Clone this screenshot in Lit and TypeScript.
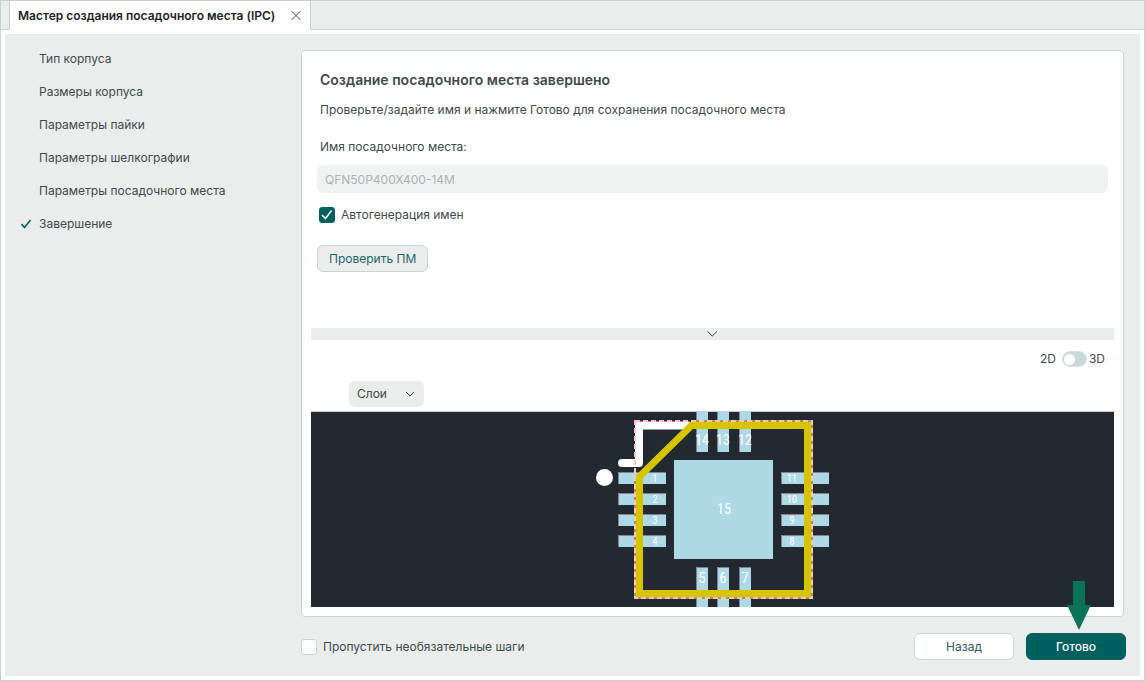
import { LitElement, html, css, svg } from "lit";
import { customElement, state } from "lit/decorators.js";

const STEPS = [
  "Тип корпуса",
  "Размеры корпуса",
  "Параметры пайки",
  "Параметры шелкографии",
  "Параметры посадочного места",
  "Завершение",
];

@customElement("footprint-preview")
class FootprintPreview extends LitElement {
  static styles = css`
    :host {
      display: block;
      background: #222931;
      min-height: 0;
      overflow: hidden;
    }
    svg {
      display: block;
      width: 100%;
      height: 100%;
    }
    .pad {
      fill: #add8e6;
    }
    .edge {
      fill: none;
      stroke: #8d7f88;
      stroke-width: 1;
    }
    .silk {
      fill: none;
      stroke: #fff;
      stroke-width: 8;
      stroke-linecap: round;
      stroke-linejoin: round;
    }
    .dot {
      fill: #fff;
    }
    .body {
      fill: none;
      stroke: #d6c400;
      stroke-width: 7;
    }
    .courtyard-base {
      fill: none;
      stroke: #a89a3a;
      stroke-width: 2;
    }
    .courtyard {
      fill: none;
      stroke: #ffc0cb;
      stroke-width: 2;
      stroke-dasharray: 5 3;
    }
    text {
      fill: #fff;
      font-family: "Roboto Condensed", Roboto, sans-serif;
      font-size: 10px;
      text-anchor: middle;
    }
    .pair {
      font-size: 14px;
    }
    .single {
      font-size: 15px;
    }
  `;

  private pad(x: number, y: number, w: number, h: number) {
    return svg`
      <rect class="pad" x=${x} y=${y} width=${w} height=${h}></rect>
      <path class="edge" d="M${x + 0.5} ${y + h}V${y + 0.5}H${x + w}"></path>`;
  }

  render() {
    const rows = [60, 81, 102, 123];
    const cols = [106, 127, 149];
    return html`
      <svg viewBox="0 0 245 195" role="img" aria-label="Посадочное место">
        ${rows.map((y) => [this.pad(28, y, 48, 12), this.pad(191, y, 48, 12)])}
        ${cols.map((x) => [this.pad(x, -30, 12, 70), this.pad(x, 155, 12, 60)])}
        <rect class="pad" x="84" y="48" width="99" height="99"></rect>
        <path class="silk" d="M32 51H49V13.5H98"></path>
        <circle class="dot" cx="14.5" cy="65.5" r="8.5"></circle>
        <path class="courtyard-base" d="M102 9H222V186H45V64"></path>
        <path class="body" d="M49.5 64.5L101.5 13.5H217.5V181.5H49.5Z"></path>
        <rect class="courtyard" x="45" y="9" width="177" height="177"></rect>
        ${rows.map(
          (y, i) => svg`
            <text x="65" y=${y + 10}>${i + 1}</text>
            <text x="202" y=${y + 10}>${11 - i}</text>`
        )}
        ${cols.map(
          (x, i) => svg`
            <text class="pair" x=${x + 6} y="33">${14 - i}</text>
            <text class="single" x=${x + 6} y="171">${5 + i}</text>`
        )}
        <text class="pair" x="134" y="102">15</text>
      </svg>
    `;
  }
}

@customElement("app-root")
class AppRoot extends LitElement {
  static styles = css`
    :host {
      display: block;
      font-family: Inter, "Noto Sans", sans-serif;
      font-size: 12px;
      line-height: 20px;
      color: #404a4a;
    }
    * {
      box-sizing: border-box;
    }
    h1,
    p,
    ul {
      margin: 0;
      padding: 0;
    }
    button,
    input,
    select {
      font: inherit;
      color: inherit;
      margin: 0;
    }
    .window {
      display: flex;
      flex-direction: column;
      min-height: 100vh;
      border: 1px solid #c5d3d0;
      background: #fff;
    }
    .tabs {
      display: flex;
      height: 29px;
      background: #ebedec;
    }
    .tabs::before {
      content: "";
      width: 8px;
      border-bottom: 1px solid #c5d3d0;
    }
    .tabs::after {
      content: "";
      flex: 1;
      border-bottom: 1px solid #c5d3d0;
    }
    .tab {
      display: flex;
      align-items: center;
      gap: 15px;
      padding: 0 8px;
      border: solid #c5d3d0;
      border-width: 0 1px;
      background: #fff;
      color: #1c2424;
      font-weight: 600;
    }
    .close {
      display: flex;
      padding: 0;
      border: 0;
      background: none;
    }
    .icon {
      fill: none;
      stroke: #404a4a;
      stroke-width: 1;
    }
    .panel {
      flex: 1;
      display: grid;
      grid-template-columns: 296px 1fr;
      margin: 4px;
      background: #ebedec;
    }
    .steps {
      list-style: none;
      padding-top: 8px;
    }
    .step {
      display: grid;
      grid-template-columns: 18px 1fr;
      align-items: center;
      height: 33px;
      padding-left: 16px;
      color: inherit;
      text-decoration: none;
    }
    .step svg {
      grid-row: 1;
      fill: none;
      stroke: #006060;
      stroke-width: 1.6;
    }
    .step-name {
      grid-column: 2;
    }
    .main {
      display: flex;
      flex-direction: column;
      gap: 16px;
      padding: 16px 14px 16px 0;
    }
    .card {
      flex: 1;
      display: flex;
      flex-direction: column;
      margin-right: 2px;
      padding: 0 9px 9px;
      border: 1px solid #c9d6d3;
      border-radius: 4px;
      background: #fff;
    }
    .form {
      display: flex;
      flex-direction: column;
      align-items: flex-start;
      padding: 19px 6px 56px;
    }
    .title,
    .hint,
    .label {
      padding-left: 3px;
    }
    .title {
      font-size: 14px;
      line-height: 20px;
      font-weight: 600;
    }
    .hint {
      margin-top: 10px;
    }
    .label {
      margin-top: 17px;
    }
    .name {
      width: 100%;
      height: 28px;
      margin-top: 8px;
      padding: 0 8px;
      border: 0;
      border-radius: 6px;
      background: #f0f2f1;
      color: #a9b3b2;
    }
    .check {
      display: flex;
      align-items: center;
      gap: 6px;
    }
    .auto {
      margin-top: 12px;
      padding-left: 2px;
    }
    .box {
      display: grid;
      width: 16px;
      height: 16px;
    }
    .box > * {
      grid-area: 1 / 1;
    }
    .box input {
      appearance: none;
      width: 16px;
      height: 16px;
      border: 1px solid #c5d3d0;
      border-radius: 3px;
      background: #fff;
    }
    .box input:checked {
      border-color: #006060;
      background: #006060;
    }
    .box svg {
      fill: none;
      stroke: #fff;
      stroke-width: 1.6;
      pointer-events: none;
    }
    .btn {
      height: 27px;
      padding: 0 11px;
      border: 1px solid #c9d6d3;
      border-radius: 6px;
      background: #fff;
      color: #2c5b5b;
      line-height: 20px;
    }
    .verify {
      margin-top: 20px;
      background: #ebedec;
      color: #17696a;
    }
    .wide {
      width: 100px;
    }
    .primary {
      border-color: #006060;
      background: #006060;
      color: #fff;
      font-weight: 500;
    }
    .splitter {
      display: flex;
      justify-content: center;
      align-items: center;
      height: 12px;
      padding: 0;
      border: 0;
      background: #ebedec;
    }
    .mode {
      display: flex;
      justify-content: flex-end;
      align-items: center;
      margin-top: 9px;
      padding-right: 9px;
    }
    .switch {
      appearance: none;
      display: flex;
      align-items: center;
      width: 25px;
      height: 16px;
      margin: 0 2px 0 6px;
      padding: 1px;
      border: 1px solid #d9e2e0;
      border-radius: 8px;
      background: #cbd8d6;
    }
    .switch::before {
      content: "";
      width: 11px;
      height: 11px;
      border-radius: 6px;
      background: #fff;
    }
    .switch:checked {
      justify-content: flex-end;
    }
    .layers {
      display: grid;
      align-items: center;
      align-self: flex-start;
      margin: 12px 0 4px 38px;
    }
    .layers > * {
      grid-area: 1 / 1;
    }
    .layers select {
      appearance: none;
      width: 75px;
      height: 26px;
      padding: 0 8px;
      border: 0;
      border-radius: 6px;
      background: #ebedec;
    }
    .layers svg {
      justify-self: end;
      margin-right: 9px;
      pointer-events: none;
    }
    footprint-preview {
      flex: 1 1 196px;
      border-top: 1px solid #c9d0d2;
    }
    .footer {
      display: flex;
      align-items: center;
      gap: 12px;
    }
    .skip {
      margin-right: auto;
    }
    .finish {
      position: relative;
      display: flex;
    }
    .arrow {
      position: absolute;
      right: 35px;
      bottom: 30px;
      fill: #0b7358;
      pointer-events: none;
    }
  `;

  @state() private auto = true;

  render() {
    return html`
      <div class="window">
        <header class="tabs">
          <div class="tab">
            <span>Мастер создания посадочного места (IPC)</span>
            <button class="close" aria-label="Закрыть">
              <svg class="icon" width="12" height="12"><path d="M1.5 1L10.5 10M10.5 1L1.5 10"></path></svg>
            </button>
          </div>
        </header>
        <div class="panel">
          <nav>
            <ul class="steps">
              ${STEPS.map(
                (name, i) => html`<li>
                  <a class="step" href="#step-${i + 1}">
                    ${i === STEPS.length - 1
                      ? html`<svg width="12" height="12"><path d="M0.5 6L3.5 9.5L9.5 2"></path></svg>`
                      : ""}
                    <span class="step-name">${name}</span>
                  </a>
                </li>`
              )}
            </ul>
          </nav>
          <main class="main">
            <section class="card">
              <div class="form">
                <h1 class="title">Создание посадочного места завершено</h1>
                <p class="hint">Проверьте/задайте имя и нажмите Готово для сохранения посадочного места</p>
                <label class="label" for="name">Имя посадочного места:</label>
                <input class="name" id="name" type="text" value="QFN50P400X400-14M" ?disabled=${this.auto} />
                <label class="check auto">
                  <span class="box">
                    <input
                      type="checkbox"
                      .checked=${this.auto}
                      @change=${(e: Event) => (this.auto = (e.target as HTMLInputElement).checked)}
                    />
                    <svg width="16" height="16"><path d="M3 8L6.5 11.5L12.5 3.5"></path></svg>
                  </span>
                  Автогенерация имен
                </label>
                <button class="btn verify">Проверить ПМ</button>
              </div>
              <button class="splitter" aria-label="Свернуть">
                <svg class="icon" width="12" height="8"><path d="M0.5 1.5L5.25 6L10 1.5"></path></svg>
              </button>
              <div class="mode">
                <label for="mode">2D</label>
                <input class="switch" id="mode" type="checkbox" role="switch" />
                <label for="mode">3D</label>
              </div>
              <div class="layers">
                <select aria-label="Слои">
                  <option>Слои</option>
                </select>
                <svg class="icon" width="10" height="8"><path d="M1 2L5 6L9 2"></path></svg>
              </div>
              <footprint-preview></footprint-preview>
            </section>
            <footer class="footer">
              <label class="check skip">
                <span class="box"><input type="checkbox" /></span>
                Пропустить необязательные шаги
              </label>
              <button class="btn wide">Назад</button>
              <div class="finish">
                <button class="btn wide primary">Готово</button>
                <svg class="arrow" width="24" height="49"><path d="M6 0H18V24H24L12 49L0 24H6Z"></path></svg>
              </div>
            </footer>
          </main>
        </div>
      </div>
    `;
  }
}
